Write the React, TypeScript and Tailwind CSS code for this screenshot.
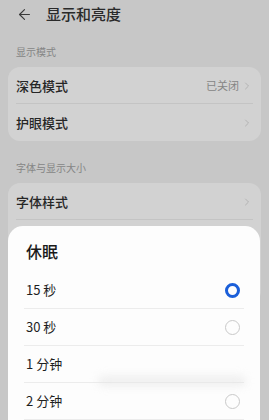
import { ChevronRight, ArrowLeft } from "lucide-react";

const font = { fontFamily: '"Noto Sans CJK SC", "Noto Sans", sans-serif' };

function Row({ label, value, last }: { label: string; value?: string; last?: boolean }) {
    return (
        <div className="relative flex items-center h-[37px] px-2">
            <span className="text-[13px] font-medium text-[#262626]">{label}</span>
            <div className="ml-auto flex items-center gap-0.5">
                {value && <span className="text-[11px] text-[#858585]">{value}</span>}
                <ChevronRight size={12} strokeWidth={1.5} className="text-[#a8a8a8]" />
            </div>
            {!last && <div className="absolute left-2 right-2 bottom-0 h-px bg-[#c4c4c4]" />}
        </div>
    );
}

function Option({ label, checked, hideRadio }: { label: string; checked?: boolean; hideRadio?: boolean }) {
    return (
        <div className="flex items-center h-[37px] mx-4 border-b border-[#ececec] pl-0.5 pr-[4px]">
            <span className="text-[13px] text-[#1f1f1f]">{label}</span>
            {!hideRadio && (
                <span
                    className={`ml-auto block w-[15px] h-[15px] rounded-full ${
                        checked ? "border-[3.5px] border-[#1b5fd9]" : "border border-[#c9c9c9]"
                    }`}
                />
            )}
        </div>
    );
}

export default function App() {
    return (
        <div className="relative w-[269px] h-[420px] overflow-hidden bg-[#c7c7c7]" style={font}>
            <div className="flex items-center h-[28px] pl-[16px] gap-[13px]">
                <ArrowLeft size={17} strokeWidth={1.6} className="text-[#3a3a3a]" />
                <span className="text-[15px] font-medium text-[#2a2a2a]">显示和亮度</span>
            </div>

            <div className="pl-4 mt-[17px] h-[14px] text-[10px] leading-[14px] text-[#858585]">显示模式</div>
            <div className="mx-2 mt-[8px] rounded-[12px] bg-[#d2d2d2]">
                <Row label="深色模式" value="已关闭" />
                <Row label="护眼模式" last />
            </div>

            <div className="pl-4 mt-[20px] h-[14px] text-[10px] leading-[14px] text-[#858585]">字体与显示大小</div>
            <div className="mx-2 mt-[8px] rounded-[12px] bg-[#d2d2d2] h-[120px]">
                <Row label="字体样式" />
            </div>

            <div className="absolute left-2 right-[9px] top-[226px] h-[220px] rounded-t-[15px] bg-[#fdfdfd]">
                <div className="pl-[18px] pt-[13px] h-[46px] text-[16px] font-medium text-[#1a1a1a]">休眠</div>
                <Option label="15 秒" checked />
                <Option label="30 秒" />
                <Option label="1 分钟" hideRadio />
                <Option label="2 分钟" />
                {/* faint smudge over the list */}
                <div className="absolute left-[90px] right-[14px] top-[150px] h-[10px] rounded-full bg-[#e4e4e4] opacity-60 blur-[4px]" />
            </div>
        </div>
    );
}
